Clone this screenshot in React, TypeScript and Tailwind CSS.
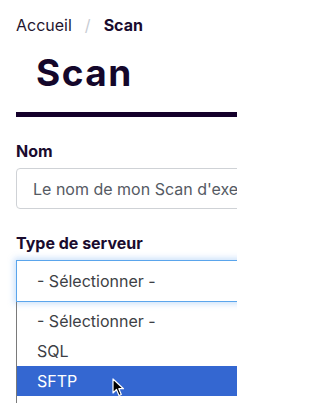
export default function App() {
  const options = ["- Sélectionner -", "SQL", "SFTP", "FTP"];

  return (
    <div className="h-[403px] w-[237px] overflow-hidden bg-white pl-4 font-['Inter',sans-serif] text-[#1a0b2e]">
      <div className="w-[400px]">
        {/* Breadcrumb */}
        <nav className="flex items-center pt-[15px] text-[16px] leading-5">
          <span className="text-[#1f1630]">Accueil</span>
          <span className="mx-[13px] text-[#c7ccd4]">/</span>
          <span className="font-bold">Scan</span>
        </nav>

        {/* Title */}
        <h1 className="mt-[14px] pl-[20px] text-[37px] font-bold leading-[48px] tracking-[1.5px] text-[#14072b]">
          Scan
        </h1>
        <div className="mt-[15px] h-[5px] bg-[#14002b]" />

        {/* Nom */}
        <label className="mt-[24px] block text-[16px] font-bold leading-5">Nom</label>
        <div className="mt-[7px] flex h-[41px] items-center rounded-[4px] border border-[#cfd2d6] pl-4 text-[16px] text-[#555a63]">
          Le nom de mon Scan d'exemple
        </div>

        {/* Type de serveur */}
        <label className="mt-[24px] block text-[16px] font-bold leading-5">Type de serveur</label>
        <div className="relative mt-[7px]">
          <div className="flex h-[42px] items-center border border-[#5aa5ec] pl-5 text-[16px] text-[#3d3f45] shadow-[0_0_6px_2px_rgba(110,170,240,0.35)]">
            - Sélectionner -
          </div>
          <ul className="border-l border-[#7a7a7a] pt-[4px] text-[16px]">
            {options.map((o) => (
              <li
                key={o}
                className={
                  o === "SFTP"
                    ? "flex h-[30px] items-center bg-[#3467d1] pl-5 text-white"
                    : "flex h-[30px] items-center pl-5 text-[#3d3f45]"
                }
              >
                {o}
              </li>
            ))}
          </ul>
          {/* cursor */}
          <svg className="absolute left-[96px] top-[118px]" width="14" height="20" viewBox="0 0 14 20">
            <path d="M1 1 L1 15 L4.5 11.5 L7 17.5 L9.3 16.5 L6.8 10.7 L11.5 10.7 Z" fill="#000" stroke="#fff" strokeWidth="1.2" strokeLinejoin="round" />
          </svg>
        </div>
      </div>
    </div>
  );
}
